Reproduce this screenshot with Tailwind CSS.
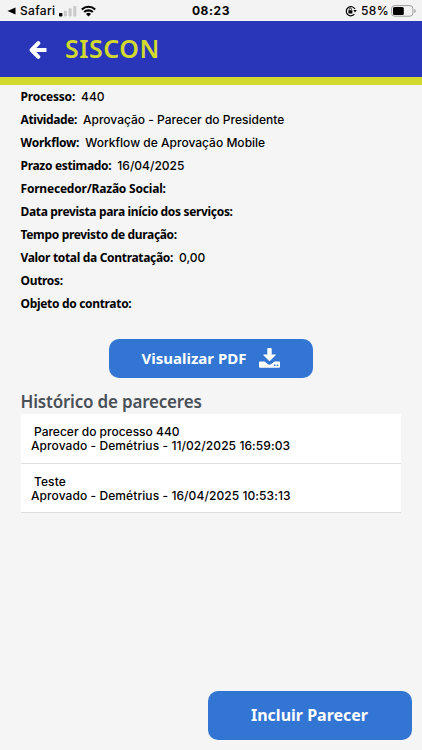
<!DOCTYPE html>
<html lang="pt-BR">
<head>
<meta charset="utf-8">
<title>SISCON</title>
<script src="https://cdn.jsdelivr.net/npm/@tailwindcss/browser@4"></script>
</head>
<body class="bg-[#f5f5f5]">
<div class="w-[422px] h-[750px] flex flex-col overflow-hidden bg-[#f5f5f5] text-black font-['Inter',sans-serif]">
  <div class="h-[21px] shrink-0 bg-[#f3f3f3] grid grid-cols-[1fr_auto_1fr] items-center pl-[7px] pr-[7px] whitespace-nowrap">
    <div class="flex items-center h-[21px]">
      <svg class="w-[9px] h-[8px]" viewBox="0 0 9 8"><path d="M0.5 4 8.5 0.5V7.5Z"/></svg>
      <span class="ml-[4px] text-[12px] leading-[21px] tracking-[0.3px] font-medium">Safari</span>
      <svg class="ml-[4px] w-[18px] h-[12px]" viewBox="0 0 18 12"><rect x="0" y="8" width="3.4" height="3.5" rx=".8"/><g fill="#c9c9c9"><rect x="4.9" y="5.8" width="3" height="5.7" rx=".8"/><rect x="9.6" y="3.3" width="3" height="8.2" rx=".8"/><rect x="14.3" y="1" width="3" height="10.5" rx=".8"/></g></svg>
      <svg class="ml-[4px] w-[15px] h-[12px]" viewBox="0 0 15 12"><g fill="none" stroke="#000" stroke-width="2.1"><path d="M.8 4.4a9.6 9.6 0 0 1 13.4 0"/><path d="M3.2 7.1a6.1 6.1 0 0 1 8.6 0"/></g><path d="M5 9a3.6 3.6 0 0 1 5 0L7.500 11.600Z"/></svg>
    </div>
    <div class="text-[12px] leading-[21px] font-bold tracking-[0.6px]">08:23</div>
    <div class="flex items-center justify-end h-[21px]">
      <svg class="w-[12px] h-[12px]" viewBox="0 0 12 12"><path d="M9.400 9.200A4.600 4.600 0 1 1 10 4.100" fill="none" stroke="#000" stroke-width="1.200"/><path d="M8.300 5h3.500L10 7.600Z"/><rect x="3.400" y="5.200" width="4" height="3.200" rx=".4"/><path d="M4.200 5.300V4.400a1.200 1.200 0 0 1 2.400 0v.9" fill="none" stroke="#000" stroke-width=".8"/></svg>
      <span class="ml-[4px] text-[12px] leading-[21px] font-medium tracking-[0.400px]">58%</span>
      <svg class="ml-[2px] mr-[-1px] w-[25px] h-[12px]" viewBox="0 0 25 12"><rect x=".6" y=".6" width="21.300" height="10.600" rx="3" fill="none" stroke="#9d9d9d"/><rect x="2" y="2" width="10.800" height="7.900" rx="1.500"/><path d="M23.300 4v4q1.400-.6 1.400-2t-1.400-2" fill="#9d9d9d"/></svg>
    </div>
  </div>
  <header class="h-[64px] shrink-0 bg-[#2936ba] border-b-8 border-[#d2d92f] flex items-center pl-[29px]">
    <svg class="w-[18px] h-[18px] mt-[1px]" viewBox="0 0 18 18" fill="none" stroke="#fff" stroke-width="4" stroke-linejoin="round"><path d="M9.300 2.200 2.600 9l6.700 6.800" stroke-linecap="round"/><path d="M3 9H17.500"/></svg>
    <h1 class="ml-[18px] mt-[-3px] font-['Noto_Sans',sans-serif] font-semibold text-[25px] leading-[30px] tracking-[0.500px] text-[#d2d92f]">SISCON</h1>
  </header>
  <main class="pl-[20.500px] pr-[21px] flex flex-col">
    <dl class="text-[12px] leading-[23px] whitespace-nowrap [&_dt]:font-['Noto_Sans',sans-serif] [&_dt]:font-bold [&>div]:flex [&>div]:h-[23px] [&>div]:gap-[6px] [&_dd]:font-medium [&_dd]:tracking-[0.010px]">
      <div><dt class="tracking-[-0.200px]">Processo:</dt><dd>440</dd></div>
      <div><dt class="tracking-[-0.400px]">Atividade:</dt><dd>Aprovação - Parecer do Presidente</dd></div>
      <div><dt class="tracking-[-0.230px]">Workflow:</dt><dd class="-tracking-[0.03px]">Workflow de Aprovação Mobile</dd></div>
      <div><dt class="tracking-[-0.320px]">Prazo estimado:</dt><dd>16/04/2025</dd></div>
      <div><dt class="tracking-[-0.200px]">Fornecedor/Razão Social:</dt></div>
      <div><dt class="tracking-[-0.330px]">Data prevista para início dos serviços:</dt></div>
      <div><dt class="tracking-[-0.330px]">Tempo previsto de duração:</dt></div>
      <div><dt class="tracking-[-0.320px]">Valor total da Contratação:</dt><dd>0,00</dd></div>
      <div><dt class="tracking-[-0.320px]">Outros:</dt></div>
      <div><dt class="tracking-[-0.320px]">Objeto do contrato:</dt></div>
    </dl>
    <button class="mt-[24px] ml-[88.500px] w-[204px] h-[39px] rounded-[10px] bg-[#3275d3] text-white flex items-center pl-[32.500px] font-['Noto_Sans',sans-serif] font-bold text-[15px]">
      <span>Visualizar PDF</span>
      <svg class="ml-auto mr-[33px] mt-[-2px] w-[21px] h-[20px]" viewBox="0 0 21 20" fill="#fff"><path d="M8.300.8q0-.8.800-.8h2.800q.8 0 .8.800V6.500h3.600q.8.100.3.800l-5.500 5.500q-.6.500-1.200 0L4.400 7.300q-.5-.7.300-.8h3.600Z"/><path fill-rule="evenodd" d="M1 13.400h4.600l3 2.700q1.900 1.400 3.800 0l3-2.700H20q1 0 1 1v4.300q0 1-1 1H1q-1 0-1-1v-4.300q0-1 1-1ZM15 16.400v1.600h1.500v-1.600ZM17.700 16.400v1.600h1.500v-1.600Z"/></svg>
    </button>
    <h2 class="mt-[11px] h-[25px] leading-[26px] font-['Noto_Sans',sans-serif] font-semibold text-[17px] tracking-[-0.200px] text-[#495057]">Histórico de pareceres</h2>
    <ul class="text-[12px] leading-[14px] font-medium tracking-[0.080px] whitespace-nowrap [&>li]:bg-white [&>li]:border-b [&>li]:border-[#dedede] [&>li]:pl-[10.500px] [&>li]:pt-[11px]">
      <li class="h-[50px]"><p class="pl-[3px] tracking-[0]">Parecer do processo 440</p><p>Aprovado - Demétrius - 11/02/2025 16:59:03</p></li>
      <li class="h-[49px]"><p class="pl-[3px]">Teste</p><p>Aprovado - Demétrius - 16/04/2025 10:53:13</p></li>
    </ul>
  </main>
  <footer class="mt-auto flex justify-end pr-[10px] pb-[10px]">
    <button class="w-[204px] h-[49px] rounded-[10px] bg-[#3275d3] text-white font-['Noto_Sans',sans-serif] font-bold text-[16px] pb-[2px] pr-[1px]">Incluir Parecer</button>
  </footer>
</div>
</body>
</html>
